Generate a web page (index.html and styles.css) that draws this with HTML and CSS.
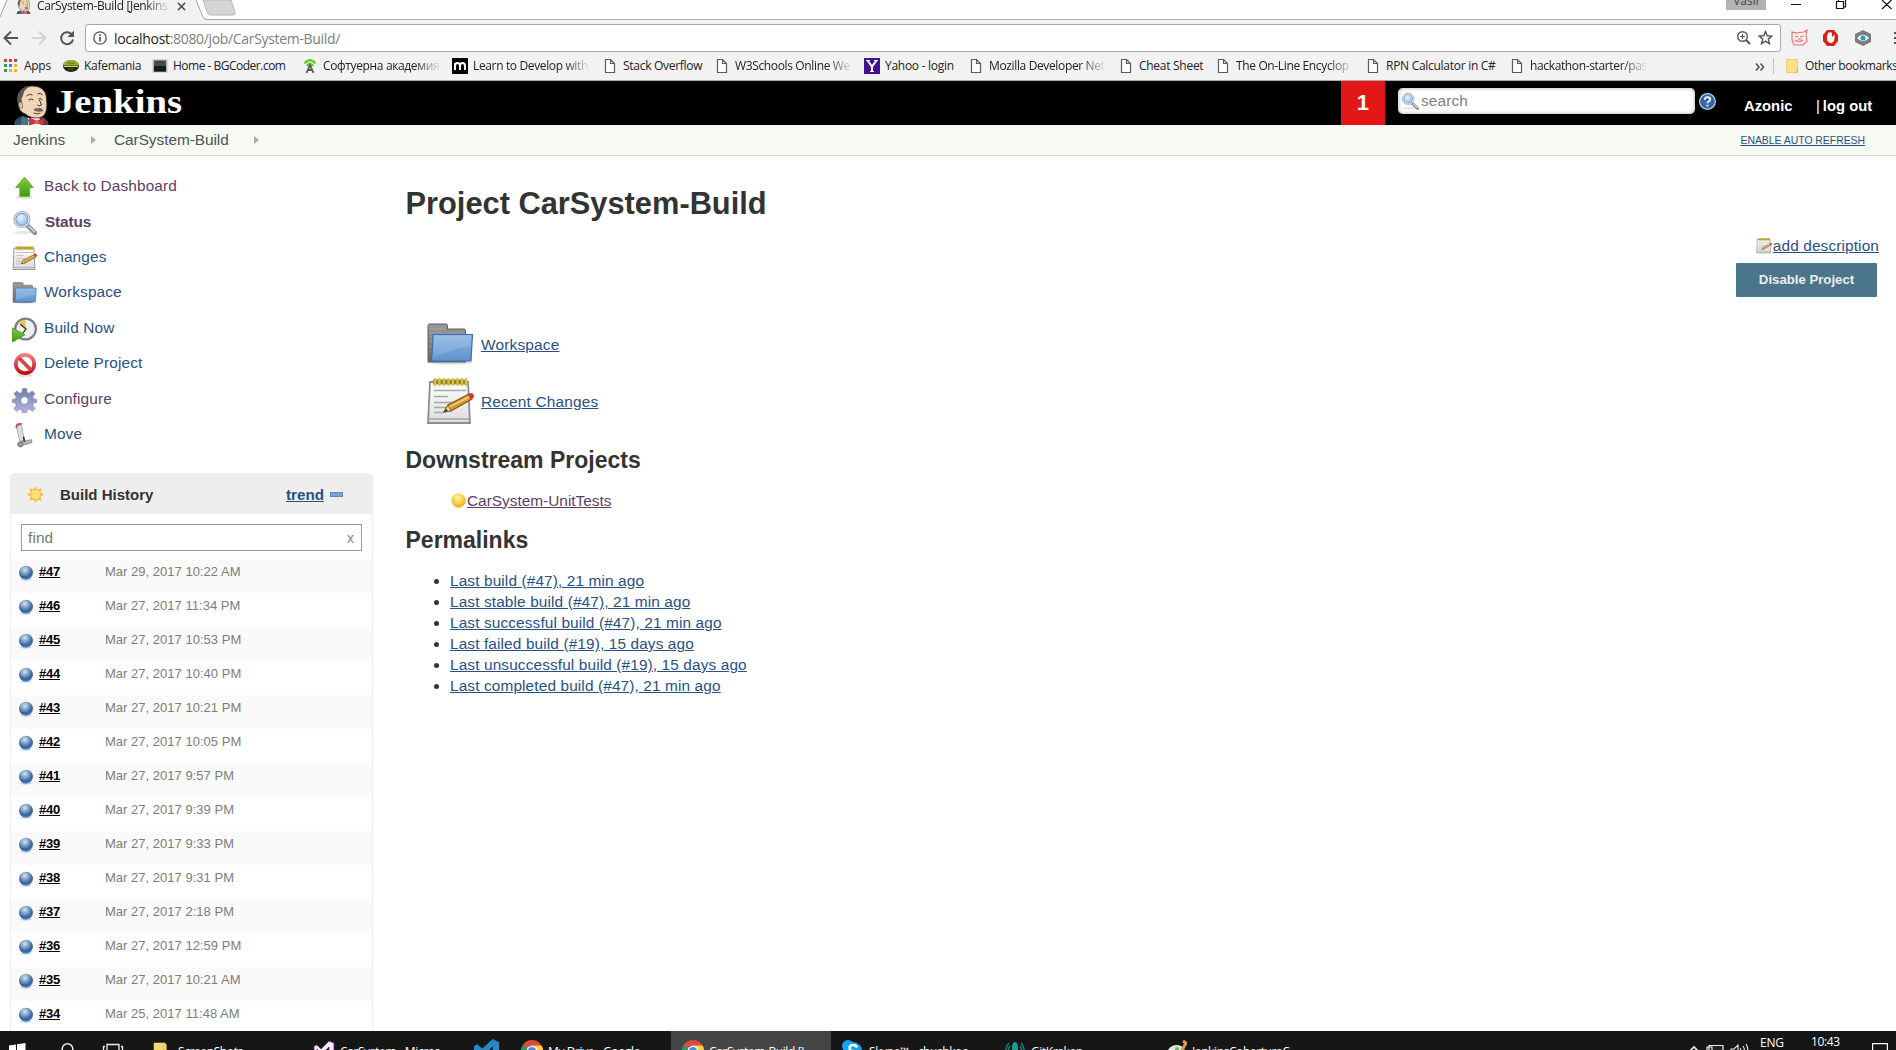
FILE: index.html
```html
<!DOCTYPE html>
<html lang="en">
<head>
<meta charset="utf-8">
<title>CarSystem-Build [Jenkins]</title>
<link rel="stylesheet" href="styles.css">
</head>
<body>
<svg class="defs" width="0" height="0" aria-hidden="true">
  <defs>
    <linearGradient id="g-green" x1="0" y1="0" x2="0" y2="1"><stop offset="0" stop-color="#7fd13b"/><stop offset="1" stop-color="#3f9a0a"/></linearGradient>
    <linearGradient id="g-blue" x1="0" y1="0" x2="0" y2="1"><stop offset="0" stop-color="#8db6e2"/><stop offset="1" stop-color="#5e93cf"/></linearGradient>
    <linearGradient id="g-gray" x1="0" y1="0" x2="0" y2="1"><stop offset="0" stop-color="#999"/><stop offset="1" stop-color="#686868"/></linearGradient>
    <linearGradient id="g-paper" x1="0" y1="0" x2="0" y2="1"><stop offset="0" stop-color="#fff"/><stop offset="1" stop-color="#dcdcdc"/></linearGradient>
    <linearGradient id="g-red" x1="0" y1="0" x2="0" y2="1"><stop offset="0" stop-color="#ef8080"/><stop offset="1" stop-color="#c40d0d"/></linearGradient>
    <linearGradient id="g-gear" x1="0" y1="0" x2="0" y2="1"><stop offset="0" stop-color="#6d7fa6"/><stop offset="1" stop-color="#b3b5e2"/></linearGradient>
    <radialGradient id="g-ball" cx=".42" cy=".28" r=".72"><stop offset="0" stop-color="#d5e6e8"/><stop offset=".35" stop-color="#86a9c8"/><stop offset=".75" stop-color="#2f5f9e"/><stop offset="1" stop-color="#5f8cc4"/></radialGradient>
    <radialGradient id="g-yball" cx=".45" cy=".3" r=".7"><stop offset="0" stop-color="#fff3a8"/><stop offset=".6" stop-color="#fbcb3c"/><stop offset="1" stop-color="#eda62c"/></radialGradient>
    <radialGradient id="g-lens" cx=".4" cy=".35" r=".7"><stop offset="0" stop-color="#eaf4ff"/><stop offset="1" stop-color="#8fb9ea"/></radialGradient>

    <symbol id="butler" viewBox="0 0 36 40">
      <path d="M1 40C0 36 3 33 9 31l8 2 10-1c6 1 8 4 8 8z" fill="#2e5266"/>
      <path d="M14 33h12l2 7H15z" fill="#fff"/>
      <path d="M9 31l7 4-3 5H7z" fill="#4b7387"/>
      <path d="M5 20C2 9 8 1 19 1c10 0 14 6 14 13 1 9 0 16-5 18-5 2-12 1-16-3-4-1-7-5-7-9z" fill="#f0d6b7" stroke="#3b3028" stroke-width=".9"/>
      <path d="M5 19C1 9 9 0 18 1c-5 2-8 5-8 8l-2 5 1 6c-2-1-3-1-4-1z" fill="#59575a"/>
      <path d="M5 18c3-2 5 1 4 5-2 1-4-1-4-5z" fill="#e5c09c" stroke="#6a4d38" stroke-width=".6"/>
      <path d="M13 11q3-3 6-1M24 9q3-2 5 1M15 15q3-2 5 0M25 14q3-1 4 1M26 15l2 5q-2 2-4 0" fill="none" stroke="#40332b" stroke-width="1"/>
      <path d="M20 25c2-3 4-1 6-2 2 0 3 1 4 3-3 1-7 1-10-1z" fill="#6d625b"/>
      <path d="M20 28q4 2 7 0" fill="none" stroke="#6a3c35" stroke-width="1"/>
      <path d="M16 33l7 3 8-3v7l-8-2-7 2z" fill="#d83131" stroke="#8a1518" stroke-width=".6"/>
      <circle cx="23" cy="37" r="2.2" fill="#ef5b57"/>
    </symbol>
    <symbol id="page" viewBox="0 0 16 16"><path d="M3.5 1.5h5l4 4v9h-9zM8.500 1.500v4h4" fill="#fff" stroke="#5a5a5a" stroke-width="1.2"/></symbol>
    <symbol id="lens" viewBox="0 0 24 24">
      <ellipse cx="11" cy="21.500" rx="9" ry="1.500" fill="#e6e6e6"/>
      <path d="M15 15l7 7" stroke="#8b8b8b" stroke-width="4.200" stroke-linecap="round"/>
      <path d="M16.500 16l5 5" stroke="#d0d0d0" stroke-width="1.700" stroke-linecap="round"/>
      <circle cx="9.500" cy="9" r="7.800" fill="#e5e9ee" stroke="#a9b2bd" stroke-width="1"/>
      <circle cx="9.500" cy="9" r="5.800" fill="url(#g-lens)" stroke="#6f9bd0" stroke-width="1"/>
    </symbol>
    <symbol id="notepad" viewBox="0 0 48 48">
      <path d="M4 4h38l2 41H2z" fill="url(#g-paper)" stroke="#8d8d8d" stroke-width="1.800"/>
      <path d="M2.500 41h41" stroke="#a2a2a2" stroke-width="1.500"/>
      <path d="M7 1.500h34v5H7z" fill="#8d8330"/>
      <path d="M9 1v6M13.500 1v6M18 1v6M22.500 1v6M27 1v6M31.500 1v6M36 1v6M40 1v6" stroke="#dcc13b" stroke-width="2.300" stroke-linecap="round"/>
      <path d="M8 12.500h32M8 18.500h14M8 24.500h24M8 29.500h17M8 34.500h10" stroke="#a8a8a8" stroke-width="1.300"/>
      <path d="M18 34l4-7L43 16l3 5-21 12z" fill="#d99a36" stroke="#7e5413" stroke-width="1.200"/>
      <path d="M23 29l20-10" stroke="#f4cd79" stroke-width="1.400"/>
      <path d="M18 34l4-7 3 6z" fill="#efd7a8" stroke="#75511c" stroke-width=".8"/>
      <path d="M18 34l2.500-3 1.200 1.800z" fill="#222"/>
      <path d="M42 16.500l3-1.500c3 0 4 4 1.500 5.500L44.500 22z" fill="#d23a2a"/>
    </symbol>
    <symbol id="folder" viewBox="0 0 48 48">
      <ellipse cx="24" cy="41.500" rx="22" ry="2" fill="#ddd"/>
      <path d="M2 41V4.500Q2 3 3.500 3H20q1.500 0 1.500 1.500V8h16.500q1.500 0 1.500 1.500V41z" fill="url(#g-gray)" stroke="#5f5f5f"/>
      <path d="M4 8h15M4 12h33M4 16h4M4 21h3M4 26h3M4 31h2" stroke="#a7a7a7" stroke-width=".8"/>
      <path d="M7 13.500h39.500L45 40H5.500z" fill="url(#g-blue)" stroke="#3c6eab" stroke-width="1.200"/>
      <path d="M8.500 14.800h36.500l-1 11C32 27 22 30 7.500 37z" fill="#fff" opacity=".13"/>
    </symbol>
    <symbol id="up" viewBox="0 0 24 24"><ellipse cx="12" cy="21.500" rx="8" ry="1.500" fill="#ddd"/><path d="M12 2L20.500 12H17v8.500H7.500V12H3.500z" fill="url(#g-green)" stroke="#5fa63c" stroke-width=".8"/></symbol>
    <symbol id="clock" viewBox="0 0 24 24">
      <circle cx="13" cy="11.500" r="10" fill="#eeeeec" stroke="#7d7d90" stroke-width="2.200"/>
      <path d="M13 11.500L5.500 5.500Q9 2 13 3.200z" fill="#dfc75c"/>
      <path d="M8 7l5.500 4.500-3 4" fill="none" stroke="#333" stroke-width="1.200"/>
      <path d="M.5 10.500L12.500 17 .5 24z" fill="url(#g-green)" stroke="#3f8d1b" stroke-width=".7"/>
    </symbol>
    <symbol id="stop" viewBox="0 0 24 24"><ellipse cx="12" cy="22.500" rx="8" ry="1.300" fill="#e2dcdc"/><circle cx="12.500" cy="11.500" r="8.800" fill="#fff" stroke="url(#g-red)" stroke-width="3.600"/><path d="M6.500 5.500l12 12" stroke="#d94545" stroke-width="3.600"/></symbol>
    <symbol id="gear" viewBox="0 0 24 24">
      <g fill="url(#g-gear)" stroke="#8189b0" stroke-width=".6">
      <path fill-rule="evenodd" d="M10 .500h4l.5 3.700 2 .9 3-2.300 2.700 2.700-2.300 3 .9 2 3.200.5v3l-3.200.5-.9 2.300 2.300 3-2.700 2.700-3-2.300-2 .8-.5 3h-4l-.5-3-2-.8-3 2.300-2.700-2.700 2.300-3-.9-2.300L0 14v-3l3.200-.5.9-2-2.300-3 2.700-2.700 3 2.300 2-.9zM12 8.500a3.500 3.500 0 1 0 0 7 3.500 3.500 0 1 0 0-7z"/></g>
    </symbol>
    <symbol id="dolly" viewBox="0 0 24 24">
      <path d="M4 3l5-1 3 15H7.500z" fill="#dedede" stroke="#a5a5a5" stroke-width=".8"/>
      <path d="M4 4.500l1-3 4.500-1" fill="none" stroke="#c44a55" stroke-width="1.800"/>
      <path d="M8 18l11-2v3l-11 3z" fill="#b5b5b5" stroke="#7b7b7b" stroke-width=".7"/>
      <path d="M11 13l1 5" stroke="#333" stroke-width="1.500"/>
      <circle cx="8" cy="20.500" r="2.500" fill="#9b9b9b" stroke="#666" stroke-width=".8"/>
    </symbol>
    <symbol id="ball" viewBox="0 0 16 16"><ellipse cx="8" cy="14.500" rx="6" ry="1.200" fill="#cfd6e0"/><circle cx="8" cy="7.800" r="7" fill="url(#g-ball)"/></symbol>
    <symbol id="chrome" viewBox="0 0 24 24">
      <circle cx="12" cy="12" r="12" fill="#dd4b3e"/>
      <path d="M1.600 6A12 12 0 0 0 12 24l5-9-5-3z" fill="#1aa260"/>
      <path d="M12 24A12 12 0 0 0 22.400 6H12v6l5 3z" fill="#ffce44"/>
      <circle cx="12" cy="12" r="5.800" fill="#fff"/><circle cx="12" cy="12" r="4.500" fill="#4587f3"/>
    </symbol>
  </defs>
</svg>

<div class="screen">
  <section class="browser">
    <div class="tabstrip">
      <div class="tab">
        <svg class="tab-shape" viewBox="0 0 240 20" preserveAspectRatio="none"><path d="M0 20V14L6 0H196L204 19.500H240V20z" fill="#f2f2f2"/><path d="M0 17L7 0M196 0l7 17q1 2.500 4 2.500h40" fill="none" stroke="#a5a5a5"/><path d="M203 0l4 12q1 3 4 3h22q3 0 2-3L231 0z" fill="#d5d5d5" stroke="#b8b8b8"/></svg>
        <div class="tab-content">
          <svg class="favicon"><use href="#butler"/></svg>
          <span class="tab-title">CarSystem-Build [Jenkins</span>
          <svg class="tab-close" viewBox="0 0 10 10"><path d="M1 1l8 8M9 1L1 9" stroke="#555" stroke-width="1.700"/></svg>
        </div>
      </div>
      <div class="window-controls">
        <span class="profile">Vasil</span>
        <svg class="win-buttons" viewBox="0 0 105 20"><path d="M0 4.500h10M45.500 1.500h7v7h-7zM47.500 1.500v-2.500h7v8h-2M91 0l9.500 9M91 9l9.500-9" fill="none" stroke="#111" stroke-width="1.200"/></svg>
      </div>
    </div>
    <div class="toolbar">
      <svg class="nav" viewBox="0 0 82 28">
        <path d="M18 14H5M11 7.500L4.500 14l6.500 6.500" fill="none" stroke="#555" stroke-width="2"/>
        <path d="M32 14h13M39 7.500l6.500 6.500-6.500 6.500" fill="none" stroke="#d4d4d4" stroke-width="2"/>
        <path d="M71.500 10A6 6 0 1 0 73 15.500" fill="none" stroke="#555" stroke-width="2"/><path d="M74 6.500v6.500h-6.500z" fill="#555"/>
      </svg>
      <div class="omnibox">
        <svg class="info" viewBox="0 0 14 14"><circle cx="7" cy="7" r="6.200" fill="none" stroke="#555" stroke-width="1.300"/><path d="M7 6v4.500M7 3.300v1.600" stroke="#555" stroke-width="1.700"/></svg>
        <span class="url"><b>localhost</b>:8080/job/CarSystem-Build/</span>
        <svg class="omni-icons" viewBox="0 0 36 16">
          <circle cx="5.500" cy="6.500" r="4.800" fill="none" stroke="#555" stroke-width="1.400"/><path d="M9 10l4 4" stroke="#555" stroke-width="2"/><path d="M3 6.500h5M5.500 4v5" stroke="#555" stroke-width="1.200"/>
          <path d="M28.500 1.500l1.700 4.300 4.600.3-3.500 3 1.100 4.500-3.900-2.500-3.900 2.500 1.100-4.500-3.500-3 4.600-.3z" fill="none" stroke="#555" stroke-width="1.400"/>
        </svg>
      </div>
      <svg class="extensions" viewBox="0 0 106 18">
        <path d="M2 3l4 1 8-1 3-2-1 6 1 5-4 4H4l-2-5zM5 7l3 1M10 8l4-1M5 11q4 3 8 0M8 10h3" fill="#fdecec" stroke="#e2706e" stroke-width="1.100"/>
        <path d="M37 1h7l4 5v6l-4 5h-7l-4-5V6z" fill="#dc2018"/><path d="M37 7v4q3 6 7 1l.5-3v-3.500L42 8V4l-2-1-2 1z" fill="#fff"/>
        <path d="M73 1l8 4v8l-8 4-8-4V5z" fill="#7d7d7d"/><path d="M67 9q6-6.500 12 0-6 6.500-12 0z" fill="#fff"/><circle cx="73" cy="9" r="2.600" fill="#2b9cc9"/>
        <path d="M105.500 3v2M105.500 8v2M105.500 13v2" stroke="#555" stroke-width="3"/>
      </svg>
    </div>
    <div class="bookmarks">
      <a class="bm"><svg viewBox="0 0 16 16"><path d="M1 1h3v3H1zM6 1h3v3H6zM11 1h3v3h-3z" fill="#d9433a"/><path d="M1 6h3v3H1z" fill="#2f9c5b"/><path d="M6 6h3v3H6z" fill="#3d7fe8"/><path d="M11 6h3v3h-3zM6 11h3v3H6zM11 11h3v3h-3z" fill="#f0b32c"/><path d="M1 11h3v3H1z" fill="#2f9c5b"/></svg><span>Apps</span></a>
      <a class="bm"><svg viewBox="0 0 16 16"><ellipse cx="8" cy="8" rx="8" ry="6" fill="#26220e"/><path d="M0 7.500Q1 2 8 2t8 5.500z" fill="#98b62d"/><path d="M1 8.500h14" stroke="#d7dc9c"/><path d="M4 5h8M5 11h6" stroke="#5c701b"/></svg><span>Kafemania</span></a>
      <a class="bm tight"><svg viewBox="0 0 16 16"><rect x=".5" y="1.500" width="15" height="13" fill="#b9b9b9"/><rect x="2" y="2.500" width="12" height="11" fill="#454a4c"/><path d="M2 8h12v5.500H2z" fill="#171a1b"/></svg><span>Home - BGCoder.com</span></a>
      <a class="bm cut"><svg viewBox="0 0 16 16"><path d="M2.500 5.500Q8-1 13.500 5.500M5 8q3-4 6 0" fill="none" stroke="#62cf22" stroke-width="2.300"/><path d="M4.500 15L8 7l3.500 8M6 12h4" fill="none" stroke="#555" stroke-width="1.800"/></svg><span>Софтуерна академия</span></a>
      <a class="bm cut"><svg viewBox="0 0 16 16"><path d="M0 0h16v16H0z"/><path d="M3 12V5M3 8q0-3 2.500-3T8 8v4M8 8q0-3 2.500-3T13 8v4" fill="none" stroke="#fff" stroke-width="2"/></svg><span>Learn to Develop with</span></a>
      <a class="bm"><svg><use href="#page"/></svg><span>Stack Overflow</span></a>
      <a class="bm cut"><svg><use href="#page"/></svg><span>W3Schools Online We</span></a>
      <a class="bm"><svg viewBox="0 0 16 16"><path d="M0 0h16v16H0z" fill="#45108e"/><path d="M3.500 2.500L8 8.500l4.500-6M8 8v5.500" fill="none" stroke="#fff" stroke-width="2"/><path d="M2 2.500h4M10 2.500h4M6 13.500h4" stroke="#fff"/></svg><span>Yahoo - login</span></a>
      <a class="bm cut"><svg><use href="#page"/></svg><span>Mozilla Developer Net</span></a>
      <a class="bm"><svg><use href="#page"/></svg><span>Cheat Sheet</span></a>
      <a class="bm cut"><svg><use href="#page"/></svg><span>The On-Line Encyclop</span></a>
      <a class="bm"><svg><use href="#page"/></svg><span>RPN Calculator in C#</span></a>
      <a class="bm cut"><svg><use href="#page"/></svg><span>hackathon-starter/pas</span></a>
      <svg class="more" viewBox="0 0 10 8"><path d="M1 .500l3 3.500-3 3.500M5.500.500l3 3.500-3 3.500" fill="none" stroke="#555" stroke-width="1.600"/></svg>
      <a class="bm other"><svg viewBox="0 0 16 16"><path d="M2.500 1.500h11v13h-11z" fill="#fee08c" stroke="#f0cd6a"/><path d="M13 10v4.500h-3" fill="none" stroke="#e2b93f"/></svg><span>Other bookmarks</span></a>
    </div>
  </section>

  <header class="jenkins-header">
    <svg class="logo" viewBox="0 0 180 44">
      <use href="#butler" x="0" y="4" width="37" height="40"/>
      <text x="42" y="31.500" textLength="127" lengthAdjust="spacingAndGlyphs" class="wordmark">Jenkins</text>
    </svg>
    <div class="header-right">
      <span class="alert-count">1</span>
      <div class="search"><svg><use href="#lens"/></svg><span>search</span></div>
      <svg class="help" viewBox="0 0 16 16"><circle cx="8" cy="8" r="7.400" fill="#3465a4" stroke="#b9cbe3" stroke-width="1.200"/><path d="M5.500 6.300Q5.500 3.800 8 3.800t2.500 2.200Q10.500 7.300 9 8 8 8.500 8 9.700M8 11v1.800" fill="none" stroke="#fff" stroke-width="1.700"/></svg>
      <a class="user">Azonic</a>
      <span class="logout"><i>|</i><a>log out</a></span>
    </div>
  </header>
  <nav class="breadcrumbs">
    <a class="crumb-home">Jenkins</a><i class="arrow"></i>
    <a class="crumb-job">CarSystem-Build</a><i class="arrow"></i>
    <a class="refresh">ENABLE AUTO REFRESH</a>
  </nav>

  <div class="content">
    <aside class="side">
      <ul class="tasks">
        <li><svg><use href="#up"/></svg><a class="visited">Back to Dashboard</a></li>
        <li class="current"><svg><use href="#lens"/></svg><a class="visited">Status</a></li>
        <li><svg><use href="#notepad"/></svg><a>Changes</a></li>
        <li><svg><use href="#folder"/></svg><a>Workspace</a></li>
        <li><svg><use href="#clock"/></svg><a>Build Now</a></li>
        <li><svg><use href="#stop"/></svg><a>Delete Project</a></li>
        <li><svg><use href="#gear"/></svg><a class="visited">Configure</a></li>
        <li><svg><use href="#dolly"/></svg><a>Move</a></li>
      </ul>
      <section class="history">
        <div class="history-head">
          <svg class="sun" viewBox="0 0 18 18"><path d="M9 0l2 3.500 4.400-1-1 4.500L18 9l-3.600 2 1 4.500-4.400-1L9 18l-2-3.500-4.400 1 1-4.500L0 9l3.600-2-1-4.500 4.400 1z" fill="#f8bd5c"/><circle cx="9" cy="9" r="5" fill="#fde26e"/></svg>
          <h3>Build History</h3>
          <a class="trend">trend</a><i class="collapse"></i>
        </div>
        <div class="find"><span>find</span><span class="clear">x</span></div>
        <ul class="builds">
          <li><svg><use href="#ball"/></svg><b>#47</b><span>Mar 29, 2017 10:22 AM</span></li>
          <li><svg><use href="#ball"/></svg><b>#46</b><span>Mar 27, 2017 11:34 PM</span></li>
          <li><svg><use href="#ball"/></svg><b>#45</b><span>Mar 27, 2017 10:53 PM</span></li>
          <li><svg><use href="#ball"/></svg><b>#44</b><span>Mar 27, 2017 10:40 PM</span></li>
          <li><svg><use href="#ball"/></svg><b>#43</b><span>Mar 27, 2017 10:21 PM</span></li>
          <li><svg><use href="#ball"/></svg><b>#42</b><span>Mar 27, 2017 10:05 PM</span></li>
          <li><svg><use href="#ball"/></svg><b>#41</b><span>Mar 27, 2017 9:57 PM</span></li>
          <li><svg><use href="#ball"/></svg><b>#40</b><span>Mar 27, 2017 9:39 PM</span></li>
          <li><svg><use href="#ball"/></svg><b>#39</b><span>Mar 27, 2017 9:33 PM</span></li>
          <li><svg><use href="#ball"/></svg><b>#38</b><span>Mar 27, 2017 9:31 PM</span></li>
          <li><svg><use href="#ball"/></svg><b>#37</b><span>Mar 27, 2017 2:18 PM</span></li>
          <li><svg><use href="#ball"/></svg><b>#36</b><span>Mar 27, 2017 12:59 PM</span></li>
          <li><svg><use href="#ball"/></svg><b>#35</b><span>Mar 27, 2017 10:21 AM</span></li>
          <li><svg><use href="#ball"/></svg><b>#34</b><span>Mar 25, 2017 11:48 AM</span></li>
        </ul>
      </section>
    </aside>

    <main class="main">
      <h1>Project CarSystem-Build</h1>
      <div class="actions">
        <div class="add-desc"><svg><use href="#notepad"/></svg><a class="link">add description</a></div>
        <button class="disable">Disable Project</button>
      </div>
      <div class="shortcuts">
        <div class="shortcut"><svg><use href="#folder"/></svg><a class="link">Workspace</a></div>
        <div class="shortcut"><svg><use href="#notepad"/></svg><a class="link">Recent Changes</a></div>
      </div>
      <h2 class="down-title">Downstream Projects</h2>
      <div class="downstream"><svg viewBox="0 0 16 16"><circle cx="8" cy="8" r="7.700" fill="url(#g-yball)"/></svg><a class="link visited">CarSystem-UnitTests</a></div>
      <h2 class="perma-title">Permalinks</h2>
      <ul class="permalinks">
        <li><a class="link">Last build (#47), 21 min ago</a></li>
        <li><a class="link">Last stable build (#47), 21 min ago</a></li>
        <li><a class="link">Last successful build (#47), 21 min ago</a></li>
        <li><a class="link">Last failed build (#19), 15 days ago</a></li>
        <li><a class="link">Last unsuccessful build (#19), 15 days ago</a></li>
        <li><a class="link">Last completed build (#47), 21 min ago</a></li>
      </ul>
    </main>
  </div>

  <footer class="taskbar">
    <div class="taskbar-inner">
      <svg class="start" viewBox="0 0 130 40">
        <path d="M9 14.500l7-1v6.500H9zM17 13.300l8.500-1.300v8H17zM9 21h7v6.500l-7-1zM17 21h8.500v8L17 27.700z" fill="#fff"/>
        <circle cx="67.500" cy="18" r="5.300" fill="none" stroke="#eee" stroke-width="1.500"/>
        <path d="M107 13.500h12v13h-12zM105 15.500h-1.500v9h1.500M121 15.500h1.500v9h-1.500" fill="none" stroke="#eee" stroke-width="1.300"/>
      </svg>
      <div class="task t-folder"><svg viewBox="0 0 22 24"><path d="M2 3h12l2 2v18H2z" fill="#f7d774"/><path d="M13 3v16" stroke="#e0b950"/></svg><span>ScreenShots</span></div>
      <div class="task t-vs"><svg viewBox="0 0 22 22"><path d="M1 6l3-1 4 4 8-8 5 2v16l-5 2-8-8-4 4-3-1zM16 7l-4 4 4 4zM4 9v5l2-2.500z" fill="#f5eaff" fill-rule="evenodd" stroke="#68217a" stroke-width=".8"/></svg><span>CarSystem - Micros...</span></div>
      <div class="task t-code"><svg viewBox="0 0 24 24"><path d="M0 7l3-2 5 4 10-9 6 3v18l-6 3-10-9-5 4-3-2zM18 7l-5 5 5 5z" fill="#2489ca" fill-rule="evenodd"/></svg></div>
      <div class="task t-drive"><svg><use href="#chrome"/></svg><span>My Drive - Google ...</span></div>
      <div class="task t-active"><svg><use href="#chrome"/></svg><span>CarSystem-Build [J...</span></div>
      <div class="task t-skype"><svg viewBox="0 0 22 22"><circle cx="11" cy="11" r="9" fill="#12a5f4"/><circle cx="6" cy="6" r="6" fill="#12a5f4"/><circle cx="16" cy="16" r="6" fill="#12a5f4"/><path d="M15 7.500Q14 5 11 5 7.500 5 7.500 8T11 11t4 3-4 3-4-2.500" fill="none" stroke="#fff" stroke-width="2.300"/></svg><span>Skype™ - chushkoo</span></div>
      <div class="task t-kraken"><svg viewBox="0 0 22 22"><path d="M8 15V8q0-6 3-6t3 6v7z" fill="#1a9a93"/><path d="M5 3Q0 8 3 16M17 3q5 5 2 13M6 6q-3 4 0 10M16 6q3 4 0 10" fill="none" stroke="#157c77" stroke-width="1.500"/></svg><span>GitKraken</span></div>
      <div class="task t-paint"><svg viewBox="0 0 22 22"><path d="M1 16Q3 5 12 5q9 1 8 10l-5 7H4z" fill="#dfe8e4"/><circle cx="7" cy="12" r="2" fill="#e1b13a"/><circle cx="12" cy="9" r="2" fill="#72b854"/><path d="M18 1l3 2-5 9" stroke="#d89b50" stroke-width="3" fill="none"/></svg><span>JenkinsCoberturaC...</span></div>
      <div class="tray">
        <svg class="tray-icons" viewBox="0 0 64 40"><path d="M3 21l5-5 5 5" fill="none" stroke="#eee" stroke-width="1.600"/><path d="M23 14.500h14v9H23zM21 16h5v5h-5z" fill="#222" stroke="#eee" stroke-width="1.200"/><path d="M45 18h3l4-4v12l-4-4h-3zM54 17q2 3 0 6M57 15q3 5 0 10M60 13q4 7 0 14" fill="none" stroke="#eee" stroke-width="1.100"/></svg>
        <span class="lang">ENG</span>
        <span class="time">10:43</span>
        <svg class="notif" viewBox="0 0 16 20"><path d="M.6 2.600h14.800v12H9l-3 3v-3H.6z" fill="none" stroke="#fff" stroke-width="1.200"/></svg>
      </div>
    </div>
  </footer>
</div>
</body>
</html>
```
FILE: styles.css
```css
* { box-sizing: border-box; }
body { margin: 0; background: #fff; color: #333; font-family: "Liberation Sans", Arial, sans-serif; font-size: 15.4px; letter-spacing: .12px; }
ul, h1, h2, h3 { margin: 0; padding: 0; }
ul { list-style: none; }
svg { display: block; flex: none; }
i { font-style: normal; }
.defs { position: absolute; }
.screen { width: 1896px; height: 1050px; display: flex; flex-direction: column; overflow: hidden; }

/* Browser chrome */
.browser { flex: none; height: 81px; background: #f2f2f2; border-bottom: 1px solid #a9a9a9; font-family: "Open Sans", "Noto Sans", sans-serif; font-size: 12px; letter-spacing: 0; color: #222; }
.tabstrip { height: 20px; display: flex; justify-content: space-between; background: linear-gradient(#fff 19px, #b0b0b0 19px); }
.tab { width: 240px; display: grid; }
.tab > * { grid-area: 1 / 1; }
.tab-shape { width: 240px; height: 20px; }
.tab-content { display: flex; height: 20px; padding-left: 16px; }
.favicon { width: 15px; height: 16px; margin-top: -2px; }
.tab-title { width: 134px; margin: -2px 0 0 6px; line-height: 16px; white-space: nowrap; letter-spacing: -.35px; -webkit-mask-image: linear-gradient(90deg, #000 108px, transparent 134px); mask-image: linear-gradient(90deg, #000 108px, transparent 134px); }
.tab-close { width: 9px; height: 9px; margin: 2px 0 0 6px; }
.window-controls { display: flex; }
.profile { width: 40px; height: 10px; margin-right: 25px; background: #b3b3b3; color: #444; text-align: center; line-height: 2px; }
.win-buttons { width: 105px; height: 20px; }
.toolbar { display: flex; height: 36px; padding-top: 4px; }
.nav { width: 82px; height: 28px; margin-right: 3px; }
.omnibox { width: 1696px; flex: none; height: 28px; display: flex; align-items: center; background: #fff; border: 1px solid #a6a6a6; border-radius: 3px; padding: 0 7px; }
.info { width: 14px; height: 14px; }
.url { flex: 1; margin-left: 7px; font-size: 14px; color: #7d7d7d; letter-spacing: -.33px; }
.url b { font-weight: 400; color: #222; }
.omni-icons { width: 36px; height: 16px; }
.extensions { width: 106px; height: 18px; margin: 5px 0 0 9px; }
.bookmarks { display: grid; grid-template-columns: 60px 89px 150px 150px 150px 112px 150px 104px 150px 97px 150px 144px 246px 18px 123px; height: 24px; padding: 3px 0 0 3px; }
.bm { display: flex; gap: 5px; height: 16px; margin-top: -1px; }
.bm svg { width: 16px; height: 16px; }
.bm span { line-height: 16px; white-space: nowrap; letter-spacing: -.28px; }
.bm.tight span { letter-spacing: -.5px; }
.bm.cut span { width: 118px; letter-spacing: -.36px; -webkit-mask-image: linear-gradient(90deg, #000 92px, transparent 118px); mask-image: linear-gradient(90deg, #000 92px, transparent 118px); }
.bm.other { border-left: 1px solid #c2c2c2; padding-left: 10px; }
.bm.other span { letter-spacing: -.4px; }
.more { width: 10px; height: 8px; margin-top: 4px; }

/* Jenkins header */
.jenkins-header { flex: none; height: 44px; background: #000; display: flex; justify-content: space-between; color: #fff; }
.logo { width: 180px; height: 44px; margin-left: 13px; }
.wordmark { font: bold 33px "Liberation Serif", Georgia, serif; fill: #fff; letter-spacing: 0; }
.header-right { display: flex; width: 555px; }
.alert-count { width: 44px; background: #e31717; font-weight: bold; font-size: 22px; line-height: 44px; text-align: center; }
.search { width: 297px; height: 26px; margin: 7px 0 0 13px; background: #fff; border-radius: 5px; box-shadow: inset 0 0 4px #aaa; display: flex; align-items: center; color: #808080; }
.search svg { width: 18px; height: 18px; margin: 0 2px 0 3px; }
.help { width: 17px; height: 17px; margin: 12px 0 0 4px; }
.user, .logout { line-height: 51px; font-weight: bold; font-size: 14.8px; letter-spacing: 0; }
.user { width: 72px; margin-left: 28px; }
.logout { display: flex; }
.logout i { font-weight: 400; margin-right: 3px; }

.breadcrumbs { flex: none; height: 31px; background: #f6faf2; border-bottom: 1px solid #d3d7cf; display: flex; align-items: center; color: #4d545d; padding: 0 31px 0 13px; letter-spacing: 0; }
.crumb-home { width: 78px; }
.crumb-job { width: 140px; margin-left: 18px; letter-spacing: -.05px; }
.arrow { border: 4px solid transparent; border-left: 5px solid #aaa; border-right: 0; }
.refresh { margin-left: auto; font-size: 10.4px; letter-spacing: 0; color: #294f85; text-decoration: underline; }

/* Sidebar */
.content { flex: 1; min-height: 0; overflow: hidden; display: flex; }
.side { width: 405.5px; flex: none; padding: 12px 32.5px 0 10px; }
.tasks li { display: flex; align-items: center; height: 35.5px; gap: 7px; padding-left: 2px; }
.tasks svg { width: 25px; height: 25px; margin: 3px 0 0 0; }
.tasks a, .link, .trend { color: #294f85; }
.tasks .visited, .link.visited { color: #5c3e68; }
.tasks .current { font-weight: bold; letter-spacing: 0; }
.tasks .current a { padding: 2px 0 0 1px; letter-spacing: -.15px; }
.history { margin-top: 21px; border: 1px solid #eee; border-radius: 5px 5px 0 0; }
.history-head { height: 40px; background: #eee; display: flex; align-items: center; padding: 0 29px 0 16px; }
.sun { width: 17px; height: 17px; }
.history-head h3 { font-size: 15px; letter-spacing: 0; margin-left: 16px; }
.trend { margin-left: auto; font-weight: bold; font-size: 15.2px; letter-spacing: 0; text-decoration: underline; }
.collapse { width: 13px; height: 5px; background: #7ea3d2; border: 1px solid #5b87c2; margin-left: 6px; }
.find { height: 27px; margin: 10px 10px 8px; border: 1px solid #999; display: flex; align-items: center; justify-content: space-between; padding: 0 7px 0 6px; color: #777; }
.clear { font-size: 14px; color: #888; }
.builds li { height: 34px; display: flex; font-size: 13px; line-height: 25px; letter-spacing: .02px; }
.builds li:nth-child(odd) { background: #fafafa; }
.builds svg { width: 16px; height: 16px; margin: 6px 5px 0 7px; }
.builds b { width: 66px; color: #000; text-decoration: underline; letter-spacing: -.2px; }
.builds span { color: #7d7d7d; }

/* Main panel */
.main { flex: 1; padding-top: 28px; }
h1 { font-size: 30.8px; line-height: 40px; letter-spacing: 0; }
h2 { font-size: 23px; line-height: 28px; letter-spacing: 0; }
.link { text-decoration: underline; }
.actions { display: flex; flex-direction: column; align-items: flex-end; gap: 7px; margin-top: 11px; padding-right: 17px; }
.add-desc { display: flex; align-items: center; gap: 1px; height: 21px; }
.add-desc svg { width: 16px; height: 16px; }
.disable { width: 141px; height: 34px; margin-right: 2px; padding: 0 0 2px; border: 0; border-radius: 1px; background: #4b758b; color: #eee; font: bold 13.2px "Liberation Sans", Arial, sans-serif; }
.shortcuts { margin-top: 19px; padding-left: 20.5px; }
.shortcut { display: flex; align-items: center; height: 57px; gap: 7px; letter-spacing: .2px; }
.shortcut svg { width: 48px; height: 48px; }
.down-title { margin-top: 16px; }
.downstream { display: flex; align-items: center; height: 21px; margin: 16px 0 15px; padding-left: 45.5px; gap: 1px; letter-spacing: 0; }
.downstream svg { width: 15px; height: 15px; }
.perma-title { margin-bottom: 16px; }
.permalinks { list-style: disc; padding-left: 44.5px; line-height: 21px; }

/* Desktop taskbar */
.taskbar { flex: none; height: 19px; overflow: hidden; background: #161616; color: #fff; font: 12px "Open Sans", "Noto Sans", sans-serif; letter-spacing: -.4px; }
.taskbar-inner { display: flex; height: 40px; }
.start { width: 130px; height: 40px; }
.task { display: flex; align-items: center; gap: 5px; height: 40px; white-space: nowrap; overflow: hidden; }
.task svg { width: 22px; height: 22px; }
.t-folder { width: 161px; padding-left: 21px; }
.t-vs { width: 161px; padding-left: 22px; }
.t-code { width: 47px; padding-left: 22px; }
.t-code svg { width: 25px; height: 25px; }
.t-drive { width: 172px; padding-left: 22px; }
.t-active { width: 160px; padding-left: 11px; background: #454545; }
.t-skype { width: 162px; padding-left: 11px; }
.t-kraken { width: 161px; padding-left: 11px; }
.t-paint { width: 161px; padding-left: 11px; }
.tray { display: flex; width: 210px; margin-left: auto; }
.tray-icons { width: 64px; height: 40px; }
.lang, .time { line-height: 23px; }
.lang { width: 51px; margin-left: 10px; letter-spacing: -.2px; }
.time { width: 61px; line-height: 22px; }
.notif { width: 16px; height: 20px; margin-top: 10px; }
```
